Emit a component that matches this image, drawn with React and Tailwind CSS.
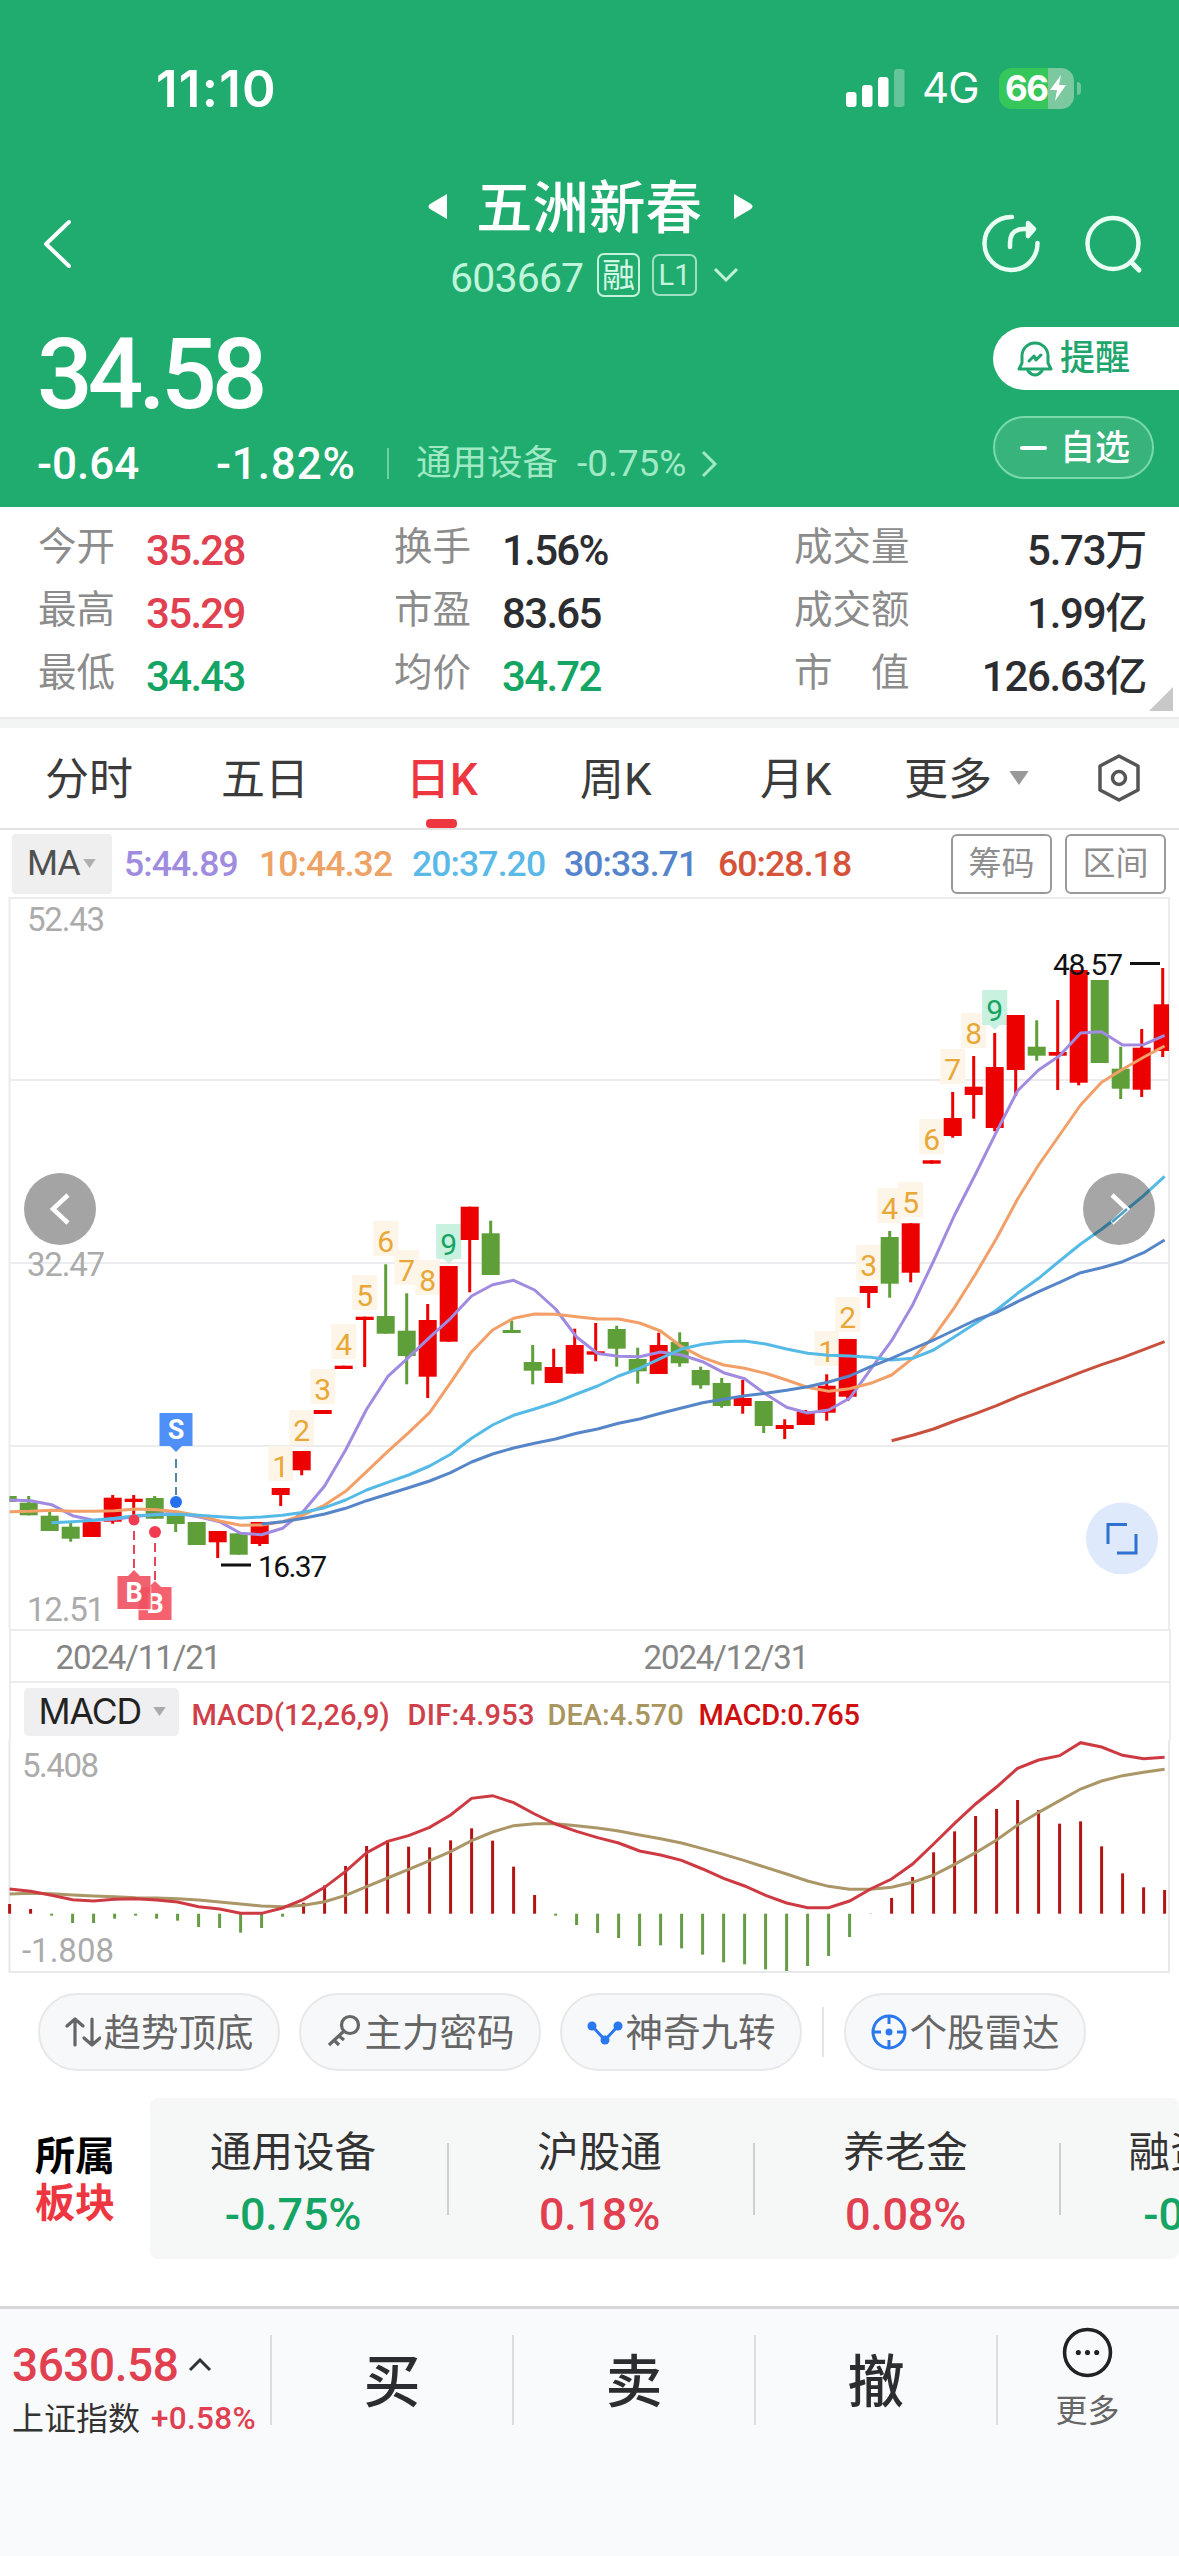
const STEP = 21;

// [up, high, open/close top, open/close bottom, low]
const candles = [
  [0, 1496, 1496, 1502, 1502], [0, 1496, 1502.7, 1515.3, 1515.3], [0, 1511, 1515.7, 1531, 1531],
  [0, 1523, 1526.7, 1538.7, 1541.7], [1, 1522, 1522, 1537, 1537], [1, 1495, 1497.7, 1521.7, 1523.7],
  [1, 1495, 1498.7, 1502, 1521], [0, 1496, 1498, 1518.7, 1518.7], [0, 1512, 1515.7, 1524, 1532],
  [0, 1522, 1522, 1545, 1545], [1, 1531, 1531, 1542.3, 1558], [0, 1533.3, 1533.3, 1554.7, 1554.7],
  [1, 1522, 1522, 1544, 1546], [1, 1488, 1488, 1495, 1506], [1, 1451, 1451, 1470.3, 1475.3],
  [1, 1410, 1410, 1414, 1414], [1, 1365.7, 1365.7, 1369, 1369], [1, 1316.7, 1316.7, 1320, 1367],
  [0, 1264.3, 1316, 1333.7, 1333.7], [0, 1293.3, 1330.7, 1356, 1384.3], [1, 1304, 1320, 1376.7, 1398],
  [1, 1266, 1266, 1341.7, 1341.7], [1, 1206.7, 1206.7, 1240, 1292.3], [0, 1220.7, 1233.3, 1275, 1275],
  [0, 1320.7, 1330, 1333, 1333], [0, 1345, 1362, 1370.7, 1384.3], [1, 1348.7, 1367, 1383, 1383],
  [1, 1328.7, 1345, 1373.7, 1373.7], [1, 1323, 1351.3, 1354.7, 1361.3], [0, 1325.7, 1329, 1348.7, 1366.7],
  [0, 1347.7, 1359, 1371.3, 1383.7], [1, 1332.7, 1345, 1374, 1374], [0, 1332.3, 1342, 1363.3, 1366.7],
  [0, 1366.7, 1370, 1385.3, 1388.7], [0, 1378, 1383, 1406, 1407.7], [1, 1380, 1398, 1406, 1413.7],
  [0, 1401, 1401, 1426, 1433], [1, 1419.3, 1425, 1429, 1439], [1, 1410, 1411.7, 1425, 1425],
  [1, 1374.3, 1385.7, 1412.7, 1420.7], [1, 1339, 1339, 1396.7, 1401], [1, 1286, 1286, 1293, 1308],
  [0, 1231, 1237, 1283.7, 1297.7], [1, 1223.3, 1223.3, 1272.7, 1282.3], [1, 1160.3, 1160.3, 1163.7, 1163.7],
  [1, 1092, 1118, 1136, 1137.7], [1, 1056, 1086.7, 1095, 1118.7], [1, 1033, 1067, 1128, 1131.3],
  [1, 1015, 1015, 1070, 1096], [0, 1020.3, 1046.7, 1055.7, 1060.7], [1, 1000, 1052, 1055.7, 1090],
  [1, 970, 970, 1082.7, 1085.3], [0, 980, 980, 1063, 1063], [0, 1046.7, 1068.7, 1088.7, 1099],
  [1, 1029, 1047.7, 1089.7, 1097], [1, 968, 1004.3, 1051, 1057],
];

const averages = [
  {
    color: '#c9503c', start: 42,
    ys: [1440.7, 1435.3, 1429, 1421, 1413.7, 1405.7, 1396.7, 1388.7, 1380.7, 1372.3, 1364.7, 1357.7, 1349.7, 1341.7],
  },
  {
    color: '#a18be0', start: 0,
    ys: [1500, 1500.7, 1504.7, 1515.7, 1520.3, 1519.3, 1516.5, 1514.3, 1513.3, 1516.7, 1521.7, 1533.3, 1534.7, 1528.3,
      1511, 1486, 1450, 1409.3, 1376.7, 1357.3, 1337.3, 1318.3, 1296, 1284.7, 1280.3, 1290, 1309, 1337, 1353.5, 1356.3,
      1356.7, 1352, 1355, 1361.7, 1372.7, 1378.7, 1394, 1407.3, 1413, 1410, 1398.3, 1369.3, 1340.7, 1305, 1261, 1215,
      1174, 1131.7, 1090.7, 1070, 1055.7, 1033, 1031.7, 1045, 1044.7, 1035.3],
  },
  {
    color: '#f2a068', start: 0,
    ys: [1511.7, 1511.3, 1510.3, 1511.3, 1511.3, 1510.7, 1509, 1509.7, 1511.7, 1515.7, 1521, 1525.3, 1525, 1521.7, 1515,
      1505, 1491.3, 1471.7, 1451.7, 1432.7, 1412.7, 1382.7, 1351.7, 1330, 1318.3, 1314, 1314.3, 1316.7, 1319, 1319,
      1323, 1331, 1346.7, 1357.7, 1365, 1368.3, 1373.3, 1380, 1387.3, 1391.3, 1388.7, 1383.3, 1375, 1358.3, 1336.7,
      1307.3, 1274, 1238.3, 1199, 1165, 1135, 1105, 1082.3, 1069.3, 1057.3, 1046],
  },
  {
    color: '#55bbe6', start: 2,
    ys: [1522.7, 1521.7, 1520.3, 1518.3, 1515.7, 1514.7, 1514.3, 1515.3, 1516.7, 1518, 1517, 1515.3, 1512.3, 1507.7,
      1500, 1490, 1482.3, 1475, 1466, 1454.3, 1438.3, 1425, 1415.3, 1409, 1402.3, 1394, 1386, 1376, 1368.3, 1358.3,
      1349, 1344.3, 1341.7, 1341, 1344, 1349, 1353.3, 1355.3, 1356, 1357.3, 1360, 1358.3, 1350, 1336.7, 1323.3, 1310,
      1293.3, 1278.3, 1261, 1244, 1229.3, 1213, 1195.7, 1176.3],
  },
  {
    color: '#5686c8', start: 12,
    ys: [1524, 1521.7, 1518.3, 1514, 1508.3, 1500.7, 1494.3, 1487.7, 1481, 1472.7, 1462, 1454, 1448, 1443.3, 1439,
      1433.3, 1429, 1423.3, 1419, 1413.3, 1408, 1402.7, 1399.3, 1395.7, 1393.3, 1390.3, 1386.7, 1382, 1376, 1366.7,
      1358.3, 1349, 1340, 1330, 1320, 1312.3, 1301.7, 1291.7, 1282.3, 1272.7, 1267.7, 1261.7, 1252.7, 1240],
  },
];

// [candle index, digit, baseline]
const turns = [
  [13, 1, 1477], [14, 2, 1441], [15, 3, 1400], [16, 4, 1355], [17, 5, 1306], [18, 6, 1252], [19, 7, 1281],
  [20, 8, 1291], [21, 9, 1255], [39, 1, 1362], [40, 2, 1328], [41, 3, 1276], [42, 4, 1219], [43, 5, 1213],
  [44, 6, 1150], [45, 7, 1080], [46, 8, 1044], [47, 9, 1021],
];

const macdBars = [702, 717, 737, 759, 759, 746, 737, 746, 752, 771, 774, 788, 774, 740, 698, 646, 588, 528, 512, 530,
  532, 511, 475, 512, 590, 675, 737, 765, 789, 804, 828, 826, 835, 854, 877, 883, 898, 903, 888, 858, 801, 732, 684,
  621, 547, 484, 438, 417, 390, 420, 461, 454, 529, 610, 652, 660];
const dif = [657, 664, 676, 689, 693, 688, 686, 690, 696, 710, 717, 730, 730, 714, 688, 652, 604, 548, 514, 497, 472,
  435, 385, 377, 398, 432, 462, 484, 503, 519, 543, 555, 571, 597, 625, 648, 676, 699, 713, 713, 693, 657, 627, 582,
  522, 460, 402, 351, 295, 270, 257, 218, 231, 256, 266, 262];
const dea = [672, 670, 671, 675, 678, 680, 683, 684, 686, 690, 696, 702, 708, 710, 706, 695, 676, 650, 624, 598, 572,
  545, 512, 486, 467, 461, 461, 467, 474, 483, 495, 506, 519, 536, 553, 572, 592, 612, 633, 649, 658, 658, 652, 637,
  615, 583, 548, 510, 465, 427, 392, 357, 333, 317, 307, 298];

const toPoints = (ys, start = 0) => ys.map((y, i) => `${9.6 + (i + start) * STEP},${y}`).join(' ');
const macdY = (v) => 1670 + v / 3;

const Caret = ({ className }) => (
  <svg viewBox="0 0 20 13" className={className} fill="currentColor">
    <path d="M1 0h18L10 13z" />
  </svg>
);

const StatusBar = () => (
  <div className="flex h-[176px] items-center pl-[156px] pr-[98px] font-[Inter,sans-serif]">
    <span className="text-[51px] font-semibold leading-none tracking-[0.025em]">11:10</span>
    <svg className="ml-auto h-[38px] w-[60px]" viewBox="0 0 60 38" fill="#fff">
      <rect x="0" y="23" width="10.5" height="15" rx="3" />
      <rect x="16" y="16" width="10.5" height="22" rx="3" />
      <rect x="32" y="8" width="10.5" height="30" rx="3" />
      <rect x="48" y="0" width="10.5" height="38" rx="3" opacity="0.3" />
    </svg>
    <span className="ml-[16px] w-[62px] text-[42px] leading-none tracking-[-0.02em]">4G</span>
    <div className="ml-[15px] flex h-[41px] w-[75px] items-center overflow-hidden rounded-[13px] bg-[linear-gradient(90deg,#35c759_66%,#7cc9a0_66%)] pl-[6px]">
      <span className="text-[35px] font-bold leading-none tracking-[-0.04em]">66</span>
      <svg className="ml-[1px] h-[26px] w-[18px]" viewBox="0 0 18 26" fill="#fff">
        <path d="M12 0 1 15h7l-2 11L17 10h-7z" />
      </svg>
    </div>
    <div className="ml-[3px] h-[13px] w-[4px] rounded-r-full bg-[#6fc79a]" />
  </div>
);

const NavBar = () => (
  <div className="flex h-[136px] items-center">
    <svg className="ml-[43px] h-[50px] w-[30px]" viewBox="0 0 30 50" fill="none" stroke="#fff" strokeWidth="4" strokeLinecap="round" strokeLinejoin="round">
      <path d="M26 3 3 25l23 22" />
    </svg>
    <div className="ml-[355px] w-[326px]">
      <div className="flex h-[62px] items-center">
        <svg className="h-[27px] w-[19px]" viewBox="0 0 19 27" fill="#fff">
          <path d="M19 1v25L2 16q-3-2.500 0-5z" />
        </svg>
        <span className="ml-[29px] w-[227px] pt-[6px] text-[56.500px] font-medium leading-none">五洲新春</span>
        <svg className="ml-[31px] h-[27px] w-[19px]" viewBox="0 0 19 27" fill="#fff">
          <path d="M0 1v25L17 16q3-2.500 0-5z" />
        </svg>
      </div>
      <div className="flex h-[76px] items-center pl-[22px]">
        <span className="w-[147px] pt-[7px] text-[41px] leading-none tracking-[-0.02em] text-[#bff5da]">603667</span>
        <span className="flex h-[44px] w-[43px] items-center justify-center rounded-[7px] border-2 border-[#c4f3dc] text-[33px] leading-none text-[#d5f8e6]">融</span>
        <span className="ml-[12px] flex h-[42px] w-[45px] items-center justify-center rounded-[7px] border-2 border-[#9fe0c0] text-[29px] leading-none text-[#c4f3dc]">L1</span>
        <svg className="ml-[16px] h-[16px] w-[26px]" viewBox="0 0 26 16" fill="none" stroke="#c4f3dc" strokeWidth="3">
          <path d="m2 2 11 11L24 2" />
        </svg>
      </div>
    </div>
    <svg className="ml-[225px] h-[60px] w-[64px]" viewBox="0 0 64 60" fill="none" stroke="#e9fff4" strokeWidth="4.500" strokeLinecap="round" strokeLinejoin="round">
      <path d="M33 3A26.500 26.500 0 1 0 58.500 29" />
      <path d="M31 33v-4q0-14 14-14h7" />
      <path d="m49 9 6 6-6 7z" fill="#e9fff4" />
    </svg>
    <svg className="ml-[40px] h-[60px] w-[60px]" viewBox="0 0 60 60" fill="none" stroke="#e9fff4" strokeWidth="4.500" strokeLinecap="round">
      <circle cx="30" cy="29.500" r="25.500" />
      <path d="m48 48 8 8" strokeWidth="5" />
    </svg>
  </div>
);

const PriceBlock = () => (
  <div className="flex h-[195px] justify-between">
    <div className="pl-[37px]">
      <div className="flex h-[126px] items-center text-[98px] font-medium leading-none tracking-[-0.05em]">34.58</div>
      <div className="flex h-[51px] items-center leading-none">
        <span className="w-[179px] text-[44px] font-medium">-0.64</span>
        <span className="w-[171px] text-[44px] font-medium tracking-[0.02em]">-1.82%</span>
        <span className="h-[31px] w-[2px] bg-[#6fd0a3]" />
        <span className="ml-[27px] w-[161px] text-[35.500px] text-[#9fe9c4]">通用设备</span>
        <span className="w-[120px] text-[37px] text-[#9fe9c4]">-0.75%</span>
        <svg className="ml-[4px] h-[28px] w-[17px]" viewBox="0 0 17 28" fill="none" stroke="#9fe9c4" strokeWidth="3">
          <path d="m2 2 12 12L2 26" />
        </svg>
      </div>
    </div>
    <div className="flex w-[186px] flex-col gap-[26px] pt-[15px]">
      <div className="flex h-[63px] items-center rounded-l-full bg-white pl-[24px] text-[#21a56d]">
        <svg className="h-[36px] w-[36px]" viewBox="0 0 36 36" fill="none" stroke="currentColor" strokeWidth="3" strokeLinecap="round" strokeLinejoin="round">
          <path d="M5 22V15a13 13 0 0 1 26 0v7l3 6H2z" />
          <path d="M11 30q7 8 14 0" />
          <path d="m12 20 5-5 2 4 5-5" />
        </svg>
        <span className="ml-[7px] text-[35px] font-medium leading-none">提醒</span>
      </div>
      <div className="flex h-[63px] w-[161px] items-center rounded-full border-2 border-[#79d9a9] bg-[#37b37b] pl-[25px]">
        <span className="h-[4px] w-[27px] rounded bg-white" />
        <span className="ml-[13px] pt-[2px] text-[35px] font-medium leading-none">自选</span>
      </div>
    </div>
  </div>
);

const quotes = [
  ['今开', '35.28', 'text-[#e0404f]', '换手', '1.56%', 'text-[#2c2d30]', '成交量', '5.73万'],
  ['最高', '35.29', 'text-[#e0404f]', '市盈', '83.65', 'text-[#2c2d30]', '成交额', '1.99亿'],
  ['最低', '34.43', 'text-[#14a463]', '均价', '34.72', 'text-[#14a463]', '市　值', '126.63亿'],
];

const Quotes = () => (
  <div className="relative h-[210px] bg-white pl-[38px] pr-[33px] pt-[9px]">
    {quotes.map(([a, av, ac, b, bv, bc, c, cv]) => (
      <div key={a} className="flex h-[63px] items-center text-[42px] font-medium leading-none tracking-[-0.04em]">
        <span className="w-[108px] text-[38.500px] font-normal tracking-normal text-[#8c8c8c]">{a}</span>
        <span className={`w-[248px] pt-[6px] ${ac}`}>{av}</span>
        <span className="w-[108px] text-[38.500px] font-normal tracking-normal text-[#8c8c8c]">{b}</span>
        <span className={`w-[292px] pt-[6px] ${bc}`}>{bv}</span>
        <span className="text-[38.500px] font-normal tracking-normal text-[#8c8c8c]">{c}</span>
        <span className="ml-auto pt-[6px] tracking-[-0.03em] text-[#2c2d30]">{cv}</span>
      </div>
    ))}
    <svg className="absolute bottom-[6px] right-[6px] h-[24px] w-[24px]" viewBox="0 0 24 24" fill="#c8c8c8">
      <path d="M24 0v24H0z" />
    </svg>
  </div>
);

const PeriodTabs = () => (
  <div className="flex h-[102px] items-center border-b-2 border-[#e2e2e2] bg-white pl-[45px] text-[44px] leading-none text-[#3b3b3b]">
    <span className="w-[176px] pt-[4px]">分时</span>
    <span className="w-[185px] pt-[4px]">五日</span>
    <span className="relative flex h-full w-[174px] items-center pt-[4px] font-medium text-[#ee3640]">
      日K
      <span className="absolute bottom-0 left-[20px] h-[9px] w-[31px] rounded-[4px] bg-[#ee3640]" />
    </span>
    <span className="w-[180px] pt-[4px]">周K</span>
    <span className="w-[144px] pt-[4px]">月K</span>
    <span className="pt-[4px]">更多</span>
    <Caret className="ml-[16px] h-[14px] w-[22px] text-[#999]" />
    <svg className="ml-[67px] h-[48px] w-[44px]" viewBox="0 0 44 48" fill="none" stroke="#555" strokeWidth="3.500" strokeLinejoin="round">
      <path d="M22 2 41 12v24L22 46 3 36V12z" />
      <circle cx="22" cy="24" r="6.500" />
    </svg>
  </div>
);

const MaRow = () => (
  <div className="flex h-[67px] items-center bg-white pl-[12px] text-[35.500px] font-medium leading-none tracking-[-0.025em]">
    <span className="flex h-[60px] w-[100px] items-center rounded-[4px] bg-[#efefef] pl-[15px] font-normal text-[#505050]">
      MA
      <Caret className="ml-[2px] h-[9px] w-[15px] text-[#b0b0b0]" />
    </span>
    <span className="ml-[12px] w-[135px] pt-[2px] text-[#9f8ce0]">5:44.89</span>
    <span className="w-[153px] pt-[2px] text-[#eda365]">10:44.32</span>
    <span className="w-[152px] pt-[2px] text-[#5ab9e6]">20:37.20</span>
    <span className="w-[154px] pt-[2px] text-[#5584cc]">30:33.71</span>
    <span className="w-[233px] pt-[2px] text-[#d6533a]">60:28.18</span>
    <span className="flex h-[60px] w-[101px] items-center justify-center rounded-[6px] border-2 border-[#9a9a9a] text-[33px] font-normal tracking-normal text-[#8e8e8e]">筹码</span>
    <span className="ml-[13px] flex h-[60px] w-[101px] items-center justify-center rounded-[6px] border-2 border-[#9a9a9a] text-[33px] font-normal tracking-normal text-[#8e8e8e]">区间</span>
  </div>
);

const Flag = ({ x, y, letter, color, up }) => (
  <g>
    <rect x={x - 16.5} y={y} width="33" height="33" fill={color} />
    <path d={up ? `M${x - 6} ${y}l6 -6 6 6z` : `M${x - 6} ${y + 33}l6 6 6 -6z`} fill={color} />
    <text x={x} y={y + 26} fontSize="27" fontWeight="700" fill="#fff" textAnchor="middle">{letter}</text>
  </g>
);

const KLine = () => (
  <svg className="block h-[732px] w-[1179px]" viewBox="0 897 1179 732">
    <clipPath id="plot"><rect x="9.500" y="897" width="1159.500" height="732" /></clipPath>
    {[898, 1080, 1263, 1446].map((y) => (
      <path key={y} d={`M9 ${y}H1169`} stroke="#ececee" strokeWidth="2" />
    ))}
    <path d="M9.500 897V1629M1169 897V1629" stroke="#ececee" strokeWidth="2" />
    <g fontSize="33" fill="#ababab">
      <text x="27" y="931" textLength="78">52.43</text>
      <text x="27" y="1276" textLength="78">32.47</text>
      <text x="27" y="1621" textLength="78">12.51</text>
    </g>
    {turns.map(([i, n, y]) => {
      const cx = 7.7 + i * STEP;
      return (
        <g key={i}>
          <rect x={cx - 12.5} y={y - 31} width="25" height="35" fill={n === 9 ? '#c9f1e0' : '#fef5e9'} />
          {n === 9 && <path d={`M${cx - 5} ${y + 4}l5 5 5 -5z`} fill="#c9f1e0" />}
          <text x={cx} y={y} fontSize="30" textAnchor="middle" fill={n === 9 ? '#16a463' : '#e8a736'}>{n}</text>
        </g>
      );
    })}
    <g clipPath="url(#plot)">
      {candles.map(([up, high, top, bottom, low], i) => {
        const cx = 7.7 + i * STEP;
        const color = up ? '#ec0000' : '#5f9f3a';
        return (
          <g key={i} fill={color}>
            <rect x={cx - 1.5} y={high} width="3" height={low - high} />
            <rect x={cx - 9} y={top} width="18" height={bottom - top} />
          </g>
        );
      })}
    </g>
    {averages.map(({ color, start, ys }) => (
      <polyline key={color} points={toPoints(ys, start)} fill="none" stroke={color} strokeWidth="3" strokeLinejoin="round" />
    ))}
    <g fontSize="30" fill="#111">
      <text x="258" y="1577" textLength="69">16.37</text>
      <path d="M221 1565h30M1130 963.500h30" stroke="#111" strokeWidth="3" />
      <text x="1053" y="975" textLength="70">48.57</text>
    </g>
    <path d="M176 1459V1495" stroke="#5289a8" strokeWidth="2" strokeDasharray="9 5" />
    <circle cx="176" cy="1502" r="6" fill="#2672ee" />
    <Flag x={176} y={1413} letter="S" color="#4e8ff8" />
    <path d="M134 1531V1568M155 1543V1582" stroke="#e8455a" strokeWidth="2" strokeDasharray="9 5" />
    <circle cx="134" cy="1520" r="5.500" fill="#ef3c50" />
    <circle cx="155" cy="1532" r="6" fill="#ef3c50" />
    <Flag x={155} y={1587} letter="B" color="#f4616f" up />
    <path d="M150.500 1586v23M138 1609.500h12" fill="none" stroke="#fcc" strokeWidth="1.500" />
    <Flag x={134} y={1576} letter="B" color="#f05161e6" up />
    <circle cx="60" cy="1209" r="36" fill="#a4a4a4" />
    <path d="m68 1195-15 14 15 14" fill="none" stroke="#fff" strokeWidth="4.500" />
    <circle cx="1119" cy="1209" r="36" fill="#000" opacity="0.350" />
    <path d="m1112 1195 15 14-15 14" fill="none" stroke="#fff" strokeWidth="4.500" />
    <path d="M1112 1222 1127 1209" stroke="#4a9fc4" strokeWidth="2.500" />
    <circle cx="1122" cy="1538.500" r="36" fill="#dee9fb" />
    <path d="M1127 1524.500H1108V1544M1136 1534V1553H1117" fill="none" stroke="#2f71cf" strokeWidth="3" />
  </svg>
);

const DateAxis = () => (
  <div className="mx-[8.5px] flex h-[54px] items-center border-2 border-[#ececee] pl-[45px] pt-[3px] text-[33px] leading-none tracking-[-0.033em] text-[#858585]">
    <span className="w-[588px]">2024/11/21</span>
    <span>2024/12/31</span>
  </div>
);

const Macd = () => (
  <div className="h-[290px]">
    <div className="mx-[8.5px] flex h-[57px] items-center border-x-2 border-[#ececee] pl-[13px] text-[29px] font-medium leading-none text-[#d0404a]">
      <span className="flex h-[48px] w-[155px] items-center rounded-[5px] bg-[#efeff1] pl-[15px] font-[Inter,sans-serif] text-[35.500px] font-normal tracking-[-0.03em] text-[#222]">
        MACD
        <Caret className="ml-[11px] h-[9px] w-[15px] text-[#aaa]" />
      </span>
      <span className="ml-[13px] w-[216px] pt-[7px]">MACD(12,26,9)</span>
      <span className="w-[140px] pt-[7px] tracking-[0.01em]">DIF:4.953</span>
      <span className="w-[151px] pt-[7px] text-[#a8955f]">DEA:4.570</span>
      <span className="pt-[7px] tracking-[-0.01em] text-[#cf1010]">MACD:0.765</span>
    </div>
    <svg className="block h-[233px] w-[1179px]" viewBox="0 1740 1179 233">
      <path d="M9.500 1740V1972H1169V1740" fill="none" stroke="#e6e8ea" strokeWidth="2" />
      <g fontSize="33" fill="#ababab">
        <text x="22" y="1777" textLength="77">5.408</text>
        <text x="22" y="1962" textLength="92">-1.808</text>
      </g>
      {macdBars.map((v, i) => (
        <path key={i} d={`M${9.6 + i * STEP} 1913.700V${macdY(v)}`} stroke={v < 731 ? '#b31515' : '#659c45'} strokeWidth="3" />
      ))}
      <polyline points={toPoints(dea.map(macdY))} fill="none" stroke="#ab9667" strokeWidth="3" />
      <polyline points={toPoints(dif.map(macdY))} fill="none" stroke="#cd3a42" strokeWidth="3" />
    </svg>
  </div>
);

const ToolPill = ({ children, label }) => (
  <div className="flex h-[78px] w-[242px] items-center justify-center gap-[3px] rounded-full border-2 border-[#e6e8ea] bg-[#f7f8f9] text-[37.500px] leading-none text-[#666]">
    {children}
    <span className="pt-[3px]">{label}</span>
  </div>
);

const Tools = () => (
  <div className="flex h-[98px] items-end pl-[38px]">
    <ToolPill label="趋势顶底">
      <svg className="h-[36px] w-[36px]" viewBox="0 0 36 36" fill="none" stroke="#666" strokeWidth="3.200" strokeLinecap="round" strokeLinejoin="round">
        <path d="M10 31V5M2 12l8-7 8 7M27 5v26M19 24l8 7 8-7" />
      </svg>
    </ToolPill>
    <div className="w-[19px]" />
    <ToolPill label="主力密码">
      <svg className="h-[36px] w-[36px]" viewBox="0 0 36 36" fill="none" stroke="#666" strokeWidth="3.200">
        <circle cx="24" cy="11" r="8.500" />
        <path d="M18 17 3 31M13 22l5 4M8 26l5 5" />
      </svg>
    </ToolPill>
    <div className="w-[19px]" />
    <ToolPill label="神奇九转">
      <svg className="h-[36px] w-[36px]" viewBox="0 0 36 36" fill="#2a78ee" stroke="#2a78ee" strokeWidth="3">
        <path d="M5 12 18 26 31 12" fill="none" />
        <circle cx="5" cy="12" r="4.500" stroke="none" />
        <circle cx="31" cy="12" r="4.500" stroke="none" />
        <circle cx="18" cy="26" r="4.500" stroke="none" />
      </svg>
    </ToolPill>
    <div className="mx-[20px] mb-[14px] h-[50px] w-[2px] bg-[#e4e4e4]" />
    <ToolPill label="个股雷达">
      <svg className="h-[36px] w-[36px]" viewBox="0 0 36 36" fill="none" stroke="#2a78ee" strokeWidth="3">
        <circle cx="18" cy="18" r="16" />
        <path d="M18 2v8M18 26v8M2 18h8M26 18h8" />
        <circle cx="18" cy="18" r="3.500" fill="#2a78ee" stroke="none" />
      </svg>
    </ToolPill>
  </div>
);

const sectors = [
  ['通用设备', '-0.75%', 'text-[#14a463]'],
  ['沪股通', '0.18%', 'text-[#e0404f]'],
  ['养老金', '0.08%', 'text-[#e0404f]'],
  ['融资融券', '-0.31%', 'text-[#14a463]'],
];

const Sectors = () => (
  <div className="mt-[27px] flex h-[161px]">
    <div className="w-[150px] shrink-0 pl-[35px] pt-[37px] text-[40px] font-bold leading-[43px]">
      <div className="h-[47px] text-black">所属</div>
      <div className="text-[#ee3640]">板块</div>
    </div>
    <div className="flex w-[1029px] shrink-0 overflow-hidden rounded-[8px] bg-[#f6f7f7]">
      {sectors.map(([name, change, color], i) => (
        <div key={name} className={`flex shrink-0 items-center ${i === 0 ? 'w-[299px]' : 'w-[306px]'}`}>
          <div className={`flex-1 pt-[11px] text-center leading-none ${i === 0 ? '-ml-[11px]' : '-ml-[3px]'}`}>
            <div className="h-[60px] text-[41.500px] text-[#333]">{name}</div>
            <div className={`text-[45px] font-medium tracking-[-0.005em] ${color}`}>{change}</div>
          </div>
          <div className="h-[72px] w-[2px] bg-[#cfcfcf]" />
        </div>
      ))}
    </div>
  </div>
);

const BottomBar = () => (
  <div className="mt-[47px] flex h-[250px] items-start border-t-[3px] border-[#d6d7d9] bg-[#f9fafb]">
    <div className="w-[270px] pl-[12px] pt-[32px] leading-none">
      <div className="flex h-[48px] items-center text-[46px] font-medium tracking-[-0.01em] text-[#e0404f]">
        <span className="w-[176px]">3630.58</span>
        <svg className="h-[14px] w-[24px]" viewBox="0 0 24 14" fill="none" stroke="#333" strokeWidth="3">
          <path d="m2 12 10-10 10 10" />
        </svg>
      </div>
      <div className="mt-[8px] flex h-[44px] items-center">
        <span className="w-[139px] text-[32px] text-[#333]">上证指数</span>
        <span className="text-[31.500px] font-medium tracking-[0.01em] text-[#e0404f]">+0.58%</span>
      </div>
    </div>
    {['买', '卖', '撤'].map((action) => (
      <div key={action} className="mt-[26px] flex h-[90px] w-[242px] items-center justify-center border-l-2 border-[#dcdddf] pt-[4px] text-[57px] font-medium leading-none text-[#2c2d30]">
        {action}
      </div>
    ))}
    <div className="mt-[26px] h-[90px] w-[2px] bg-[#dcdddf]" />
    <div className="flex flex-1 flex-col items-center pr-[2px] pt-[18px]">
      <svg className="h-[51px] w-[51px]" viewBox="0 0 50 50" fill="none" stroke="#222" strokeWidth="3.500">
        <circle cx="25" cy="25" r="22.500" />
        <g fill="#222" stroke="none">
          <circle cx="16" cy="25" r="2.500" />
          <circle cx="25" cy="25" r="2.500" />
          <circle cx="34" cy="25" r="2.500" />
        </g>
      </svg>
      <span className="mt-[17px] text-[32px] leading-none text-[#666]">更多</span>
    </div>
  </div>
);

export default function App() {
  return (
    <div className="h-[2556px] w-[1179px] overflow-hidden bg-white font-[Roboto,'Noto_Sans_CJK_SC',sans-serif]">
      <header className="h-[507px] bg-[#21ac6f] text-white">
        <StatusBar />
        <NavBar />
        <PriceBlock />
      </header>
      <Quotes />
      <div className="h-[11px] border-t-2 border-[#e9ebec] bg-[#f3f5f5]" />
      <PeriodTabs />
      <MaRow />
      <KLine />
      <DateAxis />
      <Macd />
      <Tools />
      <Sectors />
      <BottomBar />
    </div>
  );
}
